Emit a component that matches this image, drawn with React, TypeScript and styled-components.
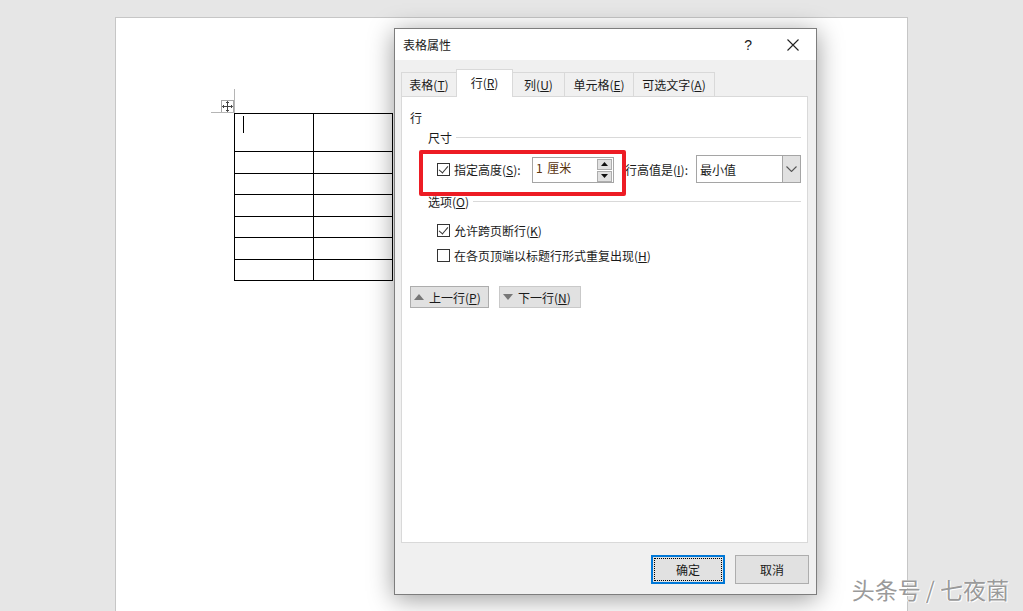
import { createGlobalStyle, styled } from "styled-components";

const rowHeights = [38, 22, 21, 22, 21, 22, 21];

const App = () => {
  return (
    <>
      <GlobalStyle />
      <Workspace>
        <Page>
          <TableArea>
            <MoveHandle>
              <svg width="11" height="11" viewBox="0 0 11 11">
                <path
                  d="M5.5 0.5v10M0.5 5.5h10M4 2l1.5-1.5L7 2M4 9l1.5 1.5L7 9M2 4L0.5 5.5 2 7M9 4l1.5 1.5L9 7"
                  fill="none"
                  stroke="#444"
                  strokeWidth="1"
                />
              </svg>
            </MoveHandle>
            <Table>
              <tbody>
                {rowHeights.map((h, i) => (
                  <tr key={i} style={{ height: h }}>
                    <Cell>{i === 0 && <Caret />}</Cell>
                    <Cell />
                  </tr>
                ))}
              </tbody>
            </Table>
          </TableArea>
        </Page>

        <Dialog>
          <TitleBar>
            <Title>表格属性</Title>
            <TitleButtons>
              <Help>?</Help>
              <svg width="12" height="12" viewBox="0 0 12 12">
                <path d="M0.5 0.5l11 11M11.5 0.5l-11 11" stroke="#222" strokeWidth="1.1" fill="none" />
              </svg>
            </TitleButtons>
          </TitleBar>

          <DialogBody>
            <Tabs>
              <Tab $w={56}>表格(<u>T</u>)</Tab>
              <Tab $w={57} $active>行(<u>R</u>)</Tab>
              <Tab $w={53}>列(<u>U</u>)</Tab>
              <Tab $w={70}>单元格(<u>E</u>)</Tab>
              <Tab $w={82}>可选文字(<u>A</u>)</Tab>
            </Tabs>

            <Panel>
              <PanelTitle>行</PanelTitle>
              <GroupHeading>
                <span>尺寸</span>
                <Rule />
              </GroupHeading>

              <SizeRow>
                <HeightField>
                  <CheckBox $checked />
                  <HeightLabel>指定高度(<u>S</u>):</HeightLabel>
                  <Spinner>
                    <SpinnerValue>1 厘米</SpinnerValue>
                    <SpinButtons>
                      <SpinButton>
                        <svg width="7" height="4" viewBox="0 0 7 4"><path d="M3.5 0L7 4H0z" fill="#111" /></svg>
                      </SpinButton>
                      <SpinButton>
                        <svg width="7" height="4" viewBox="0 0 7 4"><path d="M0 0h7L3.5 4z" fill="#111" /></svg>
                      </SpinButton>
                    </SpinButtons>
                  </Spinner>
                  <Highlight />
                </HeightField>
                <RuleLabel>行高值是(<u>I</u>):</RuleLabel>
                <Select>
                  <SelectValue>最小值</SelectValue>
                  <SelectArrow>
                    <svg width="11" height="6" viewBox="0 0 11 6">
                      <path d="M0.5 0.5l5 5 5-5" fill="none" stroke="#555" strokeWidth="1.1" />
                    </svg>
                  </SelectArrow>
                </Select>
              </SizeRow>

              <OptionsHeading>
                <span>选项(<u>O</u>)</span>
                <Rule />
              </OptionsHeading>

              <CheckRow $top={13}>
                <CheckBox $checked />
                <span>允许跨页断行(<u>K</u>)</span>
              </CheckRow>
              <CheckRow $top={11}>
                <CheckBox />
                <span>在各页顶端以标题行形式重复出现(<u>H</u>)</span>
              </CheckRow>

              <StepButtons>
                <StepButton $w={79}>
                  <svg width="10" height="6" viewBox="0 0 10 6"><path d="M5 0l5 6H0z" fill="#777" /></svg>
                  <span>上一行(<u>P</u>)</span>
                </StepButton>
                <StepButton $w={82} $raised>
                  <svg width="10" height="6" viewBox="0 0 10 6"><path d="M0 0h10L5 6z" fill="#777" /></svg>
                  <span>下一行(<u>N</u>)</span>
                </StepButton>
              </StepButtons>
            </Panel>

            <Footer>
              <FooterButton $primary>
                <FocusRing>确定</FocusRing>
              </FooterButton>
              <FooterButton>取消</FooterButton>
            </Footer>
          </DialogBody>
        </Dialog>

        <Watermark>头条号 / 七夜菌</Watermark>
      </Workspace>
    </>
  );
};

export default App;

const GlobalStyle = createGlobalStyle`
  html, body {
    margin: 0;
    padding: 0;
    height: 100%;
    overflow: hidden;
  }
  body {
    font-family: "Noto Sans CJK SC", "Liberation Sans", sans-serif;
    font-size: 12px;
    color: #1a1a1a;
  }
`;

const Workspace = styled.div`
  position: relative;
  width: 1023px;
  height: 611px;
  overflow: hidden;
  background: #e6e6e6;
  padding: 17px 115px 0 115px;
  box-sizing: border-box;
`;

const Page = styled.div`
  height: 594px;
  box-sizing: border-box;
  background: #fff;
  border: 1px solid #c6c6c6;
  border-bottom: none;
  padding: 95px 0 0 118px;
`;

const TableArea = styled.div`
  position: relative;
  width: 160px;
`;

const MoveHandle = styled.div`
  position: absolute;
  left: -13px;
  top: -13px;
  width: 11px;
  height: 11px;
  border: 1px solid #a6a6a6;
  background: #fff;
  display: flex;

  &::before {
    content: "";
    position: absolute;
    left: -11px;
    top: 11px;
    width: 23px;
    height: 1px;
    background: #b5b5b5;
  }

  &::after {
    content: "";
    position: absolute;
    left: 12px;
    top: -12px;
    width: 1px;
    height: 24px;
    background: #b5b5b5;
  }
`;

const Table = styled.table`
  border-collapse: collapse;
  table-layout: fixed;
  width: 159px;
`;

const Cell = styled.td`
  border: 1px solid #000;
  padding: 2px 0 0 8px;
  vertical-align: top;
`;

const Caret = styled.div`
  width: 1px;
  height: 17px;
  background: #000;
`;

const Dialog = styled.div`
  position: absolute;
  left: 394px;
  top: 28px;
  width: 423px;
  height: 567px;
  box-sizing: border-box;
  border: 1px solid #7d7d7d;
  background: #f0f0f0;
  box-shadow: 0 4px 24px rgba(0, 0, 0, 0.4);
  display: flex;
  flex-direction: column;
`;

const TitleBar = styled.div`
  height: 31px;
  flex: none;
  background: #fff;
  display: flex;
  align-items: center;
  justify-content: space-between;
  padding: 0 17px 0 8px;
`;

const Title = styled.span`
  font-size: 12px;
`;

const TitleButtons = styled.div`
  display: flex;
  align-items: center;
  gap: 35px;
`;

const Help = styled.span`
  font-size: 14px;
  font-family: "Liberation Sans", sans-serif;
`;

const DialogBody = styled.div`
  flex: 1;
  display: flex;
  flex-direction: column;
  padding: 9px 8px 0 6px;
  min-height: 0;
`;

const Tabs = styled.div`
  display: flex;
  align-items: flex-end;
  height: 28px;
  position: relative;
  z-index: 1;
  margin-bottom: -1px;
`;

const Tab = styled.div<{ $w: number; $active?: boolean }>`
  width: ${(p) => p.$w}px;
  height: ${(p) => (p.$active ? 28 : 25)}px;
  box-sizing: border-box;
  display: flex;
  align-items: center;
  justify-content: center;
  background: ${(p) => (p.$active ? "#fff" : "#f0f0f0")};
  border: 1px solid #d9d9d9;
  border-bottom: ${(p) => (p.$active ? "none" : "1px solid #d9d9d9")};
  margin-left: -1px;
  padding-bottom: ${(p) => (p.$active ? 3 : 0)}px;
  position: relative;
  z-index: ${(p) => (p.$active ? 2 : 1)};
  font-size: 12px;
  &:first-child {
    margin-left: 0;
  }
`;

const Panel = styled.div`
  height: 447px;
  flex: none;
  box-sizing: border-box;
  background: #fff;
  border: 1px solid #d9d9d9;
  padding: 12px 6px 0 8px;
  display: flex;
  flex-direction: column;
`;

const PanelTitle = styled.div`
  height: 18px;
  line-height: 18px;
`;

const GroupHeading = styled.div`
  display: flex;
  align-items: center;
  gap: 4px;
  height: 18px;
  margin: 1px 0 0 18px;
`;

const OptionsHeading = styled(GroupHeading)`
  margin-top: 9px;
`;

const Rule = styled.div`
  flex: 1;
  height: 1px;
  background: #d9d9d9;
`;

const SizeRow = styled.div`
  display: flex;
  align-items: center;
  margin-top: 9px;
  height: 28px;
`;

const HeightField = styled.div`
  position: relative;
  display: flex;
  align-items: center;
  width: 187px;
  padding-left: 27px;
  height: 26px;
  flex: none;
`;

const Highlight = styled.div`
  position: absolute;
  left: 9px;
  top: -6px;
  width: 207px;
  height: 46px;
  box-sizing: border-box;
  border: 4px solid #ed1c24;
  border-radius: 2px;
  pointer-events: none;
`;

const CheckBox = styled.div<{ $checked?: boolean }>`
  width: 13px;
  height: 13px;
  box-sizing: border-box;
  flex: none;
  border: 1px solid #333;
  background: #fff;
  position: relative;

  ${(p) =>
    p.$checked &&
    `
    &::after {
      content: "";
      position: absolute;
      left: 3px;
      top: 0px;
      width: 4px;
      height: 8px;
      border: solid #333;
      border-width: 0 1px 1px 0;
      transform: rotate(40deg);
    }
  `}
`;

const HeightLabel = styled.span`
  margin-left: 4px;
  width: 78px;
  flex: none;
  white-space: nowrap;
`;

const Spinner = styled.div`
  width: 82px;
  height: 26px;
  flex: none;
  box-sizing: border-box;
  border: 1px solid #a5a5a5;
  display: flex;
  align-items: center;
  justify-content: space-between;
  padding: 0 1px 0 3px;
  margin-top: 2px;
`;

const SpinnerValue = styled.span`
  color: #5a3410;
  padding-bottom: 6px;
  word-spacing: 2px;
`;

const SpinButtons = styled.div`
  display: flex;
  flex-direction: column;
  gap: 1px;
  border-left: 1px solid #fff;
`;

const SpinButton = styled.div`
  width: 15px;
  height: 11px;
  box-sizing: border-box;
  background: #e1e1e1;
  border: 1px solid #adadad;
  display: flex;
  align-items: center;
  justify-content: center;
`;

const RuleLabel = styled.span`
  width: 71px;
  flex: none;
  margin-left: 1px;
  white-space: nowrap;
`;

const Select = styled.div`
  width: 105px;
  height: 28px;
  flex: none;
  box-sizing: border-box;
  border: 1px solid #a5a5a5;
  display: flex;
  align-items: center;
  background: #fff;
`;

const SelectValue = styled.span`
  flex: 1;
  padding-left: 3px;
`;

const SelectArrow = styled.div`
  width: 17px;
  height: 100%;
  background: #e1e1e1;
  border-left: 1px solid #a5a5a5;
  display: flex;
  align-items: center;
  justify-content: center;
`;

const CheckRow = styled.div<{ $top: number }>`
  display: flex;
  align-items: center;
  gap: 4px;
  height: 14px;
  margin: ${(p) => p.$top}px 0 0 27px;
`;

const StepButtons = styled.div`
  display: flex;
  gap: 10px;
  margin-top: 24px;
`;

const StepButton = styled.div<{ $w: number; $raised?: boolean }>`
  width: ${(p) => p.$w}px;
  height: 22px;
  box-sizing: border-box;
  background: #e1e1e1;
  border: 1px solid ${(p) => (p.$raised ? "#c9c9c9" : "#adadad")};
  display: flex;
  align-items: center;
  gap: 5px;
  padding-left: 3px;
`;

const Footer = styled.div`
  display: flex;
  justify-content: flex-end;
  gap: 10px;
  margin-top: 12px;
`;

const FooterButton = styled.div<{ $primary?: boolean }>`
  width: 74px;
  height: 29px;
  box-sizing: border-box;
  background: #e1e1e1;
  border: ${(p) => (p.$primary ? "2px solid #0078d7" : "1px solid #adadad")};
  display: flex;
  align-items: center;
  justify-content: center;
  padding: ${(p) => (p.$primary ? "1px" : "0")};
  margin-right: ${(p) => (p.$primary ? 0 : -1)}px;
`;

const FocusRing = styled.div`
  flex: 1;
  align-self: stretch;
  display: flex;
  align-items: center;
  justify-content: center;
  border: 1px dotted #000;
`;

const Watermark = styled.div`
  position: absolute;
  right: 14px;
  top: 574px;
  font-size: 23px;
  line-height: 30px;
  color: #9a9a9a;
  text-shadow: 1px 1px 0 #fff, -1px 0 0 #fff;
  white-space: nowrap;
`;
